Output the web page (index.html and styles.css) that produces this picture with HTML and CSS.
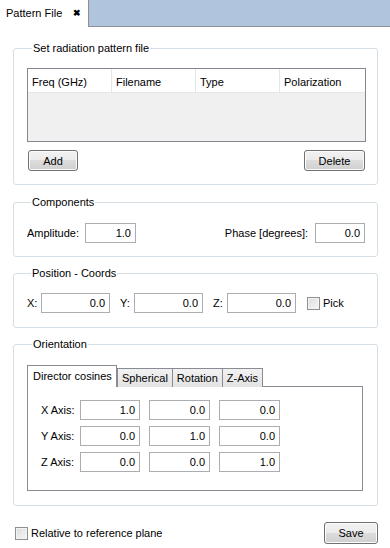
FILE: index.html
```html
<!DOCTYPE html>
<html>
<head>
<meta charset="utf-8">
<link rel="stylesheet" href="styles.css">
</head>
<body>
<div class="tabbar">
  <div class="doc-tab"><span>Pattern File</span><span class="close">✖</span></div>
  <div class="tabfill"></div>
</div>
<div class="content">
  <fieldset class="group g1">
    <legend>Set radiation pattern file</legend>
    <div class="table">
      <div class="thead">
        <div class="th">Freq (GHz)</div>
        <div class="th">Filename</div>
        <div class="th">Type</div>
        <div class="th">Polarization</div>
      </div>
    </div>
    <div class="btnrow">
      <button class="btn add">Add</button>
      <button class="btn del">Delete</button>
    </div>
  </fieldset>

  <fieldset class="group g2">
    <legend>Components</legend>
    <div class="row spread">
      <div class="pair"><span class="lbl amp">Amplitude:</span><span class="field w51">1.0</span></div>
      <div class="pair"><span class="lbl phase">Phase [degrees]:</span><span class="field w50">0.0</span></div>
    </div>
  </fieldset>

  <fieldset class="group g3">
    <legend>Position - Coords</legend>
    <div class="row coords">
      <span class="lbl cl">X:</span><span class="field w69">0.0</span>
      <span class="lbl cl gapl">Y:</span><span class="field w69">0.0</span>
      <span class="lbl cl gapl">Z:</span><span class="field w69">0.0</span>
      <span class="check pick"></span><span class="lbl">Pick</span>
    </div>
  </fieldset>

  <fieldset class="group g4">
    <legend>Orientation</legend>
    <div class="tabs">
      <div class="tab active">Director cosines</div>
      <div class="tab">Spherical</div>
      <div class="tab">Rotation</div>
      <div class="tab">Z-Axis</div>
    </div>
    <div class="pane">
      <div class="axisrow"><span class="albl">X Axis:</span><span class="field w60">1.0</span><span class="field w61">0.0</span><span class="field w61">0.0</span></div>
      <div class="axisrow"><span class="albl">Y Axis:</span><span class="field w60">0.0</span><span class="field w61">1.0</span><span class="field w61">0.0</span></div>
      <div class="axisrow"><span class="albl">Z Axis:</span><span class="field w60">0.0</span><span class="field w61">0.0</span><span class="field w61">1.0</span></div>
    </div>
  </fieldset>

  <div class="footer">
    <div class="pair"><span class="check"></span><span class="lbl">Relative to reference plane</span></div>
    <button class="btn save">Save</button>
  </div>
</div>
</body>
</html>
```

FILE: styles.css
```css
* { box-sizing: border-box; }
html, body { margin: 0; padding: 0; background: #ffffff; }
body {
  font-family: "Liberation Sans", Arial, sans-serif;
  font-size: 11px;
  color: #000;
  width: 390px;
  height: 548px;
  overflow: hidden;
}
.tabbar { display: flex; height: 27px; }
.doc-tab {
  width: 89px;
  height: 27px;
  background: #fff;
  border-right: 1px solid #8e8f92;
  display: flex;
  align-items: center;
  padding: 0 0 2px 6px;
  gap: 11px;
}
.doc-tab .close { font-size: 9px; font-weight: bold; }
.tabfill {
  flex: 1;
  background: #b0c4de;
  border-bottom: 1px solid #8e8f92;
}
.content { padding: 14px 12px 0 13px; }
.group {
  margin: 0;
  border: 1px solid #d5dfe5;
  border-radius: 3px;
  min-width: 0;
}
.group legend {
  line-height: 14px;
  padding: 0 1px;
  margin-left: 5px;
}
.g1 { padding: 13px 11px 13px 13px; }
.g2 { margin-top: 10px; padding: 14px 12px 13px 12px; }
.g3 { margin-top: 9px; padding: 13px 12px 14px 12px; }
.g4 { margin-top: 9px; padding: 14px 14px 14px 13px; }

.table {
  height: 74px;
  border: 1px solid #828790;
  background: #f0f0f0;
}
.thead { display: flex; height: 24px; background: #fff; }
.th {
  width: 84px;
  border-right: 1px solid #e5e5e5;
  border-bottom: 1px solid #e5e5e5;
  padding: 7px 0 0 4px;
}
.th:last-child { flex: 1; border-right: none; }

.btnrow { display: flex; justify-content: space-between; margin-top: 8px; padding-left: 1px; padding-right: 1px; }
.btn {
  font-family: inherit;
  font-size: 11px;
  color: #000;
  height: 21px;
  border: 1px solid #707070;
  border-radius: 3px;
  background: linear-gradient(#f2f2f2 0%, #ebebeb 49%, #dddddd 50%, #cfcfcf 100%);
  box-shadow: inset 0 0 0 1px #fcfcfc;
  padding: 0;
}
.add { width: 50px; }
.del { width: 61px; }
.save { width: 54px; height: 22px; }

.row { display: flex; align-items: center; }
.spread { justify-content: space-between; }
.pair { display: flex; align-items: center; }
.lbl { white-space: nowrap; }
.amp { margin-left: 1px; margin-right: 6px; }
.phase { margin-right: 7px; }
.field {
  display: inline-block;
  height: 20px;
  border: 1px solid #abadb3;
  background: #fff;
  text-align: right;
  padding: 3px 4px 0 0;
  line-height: 13px;
}
.w51 { width: 51px; }
.w50 { width: 50px; }
.w69 { width: 69px; }
.w60 { width: 60px; }
.w61 { width: 61px; margin-left: 9px; }
.coords .cl { margin-left: 1px; width: 14px; }
.coords .gapl { margin-left: 10px; }
.check {
  display: inline-block;
  width: 13px;
  height: 13px;
  border: 1px solid #8f8f8f;
  background: linear-gradient(135deg, #dcdcdc, #f6f6f6);
  box-shadow: inset 0 0 0 1px #f4f4f4;
  margin-right: 3px;
}
.pick { margin-left: 11px; }

.tabs { display: flex; align-items: flex-end; height: 22px; position: relative; z-index: 1; }
.tab {
  height: 19px;
  border: 1px solid #898c95;
  border-bottom: none;
  background: linear-gradient(#f2f2f2, #e3e3e3);
  padding: 3px 4px 0 4px;
  margin-left: -1px;
  white-space: nowrap;
}
.tab.active {
  height: 22px;
  background: #fff;
  margin-left: 0;
  padding: 4px 5px 0 5px;
  width: 90px;
  margin-right: 1px;
}
.pane {
  margin-top: -1px;
  border: 1px solid #898c95;
  background: #fff;
  padding: 13px 0 17px 13px;
  height: 105px;
}
.axisrow { display: flex; align-items: center; height: 20px; margin-bottom: 6px; }
.albl { width: 39px; text-align: left; white-space: nowrap; }
.axisrow .w60 { margin-left: 0; width: 60px; }
.axisrow .albl + .field { margin-left: 0; }

.footer {
  display: flex;
  justify-content: space-between;
  align-items: center;
  margin-top: 16px;
  margin-left: 2px;
  padding-right: 0;
}
```
